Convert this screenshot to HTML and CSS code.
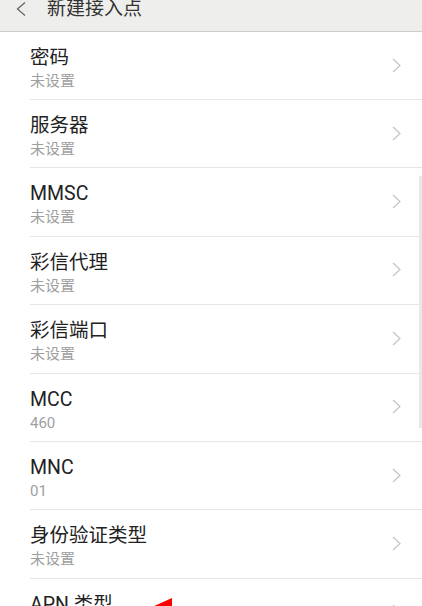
FILE: index.html
```html
<!DOCTYPE html>
<html lang="zh-CN">
<head>
    <meta charset="UTF-8">
    <meta name="viewport" content="width=device-width, initial-scale=1.0">
    <title>新建接入点</title>
    <link rel="stylesheet" href="styles.css">
</head>
<body>

    <!-- Title bar -->
    <div class="title-bar">
        <svg class="back-icon" viewBox="0 0 10 14" width="10" height="14">
            <polyline points="9,0.5 1.5,7 9,13.5" fill="none" stroke="#666" stroke-width="1.3"/>
        </svg>
        <span class="title">新建接入点</span>
    </div>

    <!-- Settings list -->
    <div class="settings-list">
        <div class="setting-row">
            <div class="setting-text">
                <div class="setting-name">密码</div>
                <div class="setting-value">未设置</div>
            </div>
            <svg class="chevron" viewBox="0 0 9 15" width="9" height="15"><polyline points="1,1 8,7.5 1,14" fill="none" stroke="#c4c4c4" stroke-width="1.2"/></svg>
        </div>
        <div class="setting-row">
            <div class="setting-text">
                <div class="setting-name">服务器</div>
                <div class="setting-value">未设置</div>
            </div>
            <svg class="chevron" viewBox="0 0 9 15" width="9" height="15"><polyline points="1,1 8,7.5 1,14" fill="none" stroke="#c4c4c4" stroke-width="1.2"/></svg>
        </div>
        <div class="setting-row">
            <div class="setting-text">
                <div class="setting-name">MMSC</div>
                <div class="setting-value">未设置</div>
            </div>
            <svg class="chevron" viewBox="0 0 9 15" width="9" height="15"><polyline points="1,1 8,7.5 1,14" fill="none" stroke="#c4c4c4" stroke-width="1.2"/></svg>
        </div>
        <div class="setting-row">
            <div class="setting-text">
                <div class="setting-name">彩信代理</div>
                <div class="setting-value">未设置</div>
            </div>
            <svg class="chevron" viewBox="0 0 9 15" width="9" height="15"><polyline points="1,1 8,7.5 1,14" fill="none" stroke="#c4c4c4" stroke-width="1.2"/></svg>
        </div>
        <div class="setting-row">
            <div class="setting-text">
                <div class="setting-name">彩信端口</div>
                <div class="setting-value">未设置</div>
            </div>
            <svg class="chevron" viewBox="0 0 9 15" width="9" height="15"><polyline points="1,1 8,7.5 1,14" fill="none" stroke="#c4c4c4" stroke-width="1.2"/></svg>
        </div>
        <div class="setting-row">
            <div class="setting-text">
                <div class="setting-name">MCC</div>
                <div class="setting-value">460</div>
            </div>
            <svg class="chevron" viewBox="0 0 9 15" width="9" height="15"><polyline points="1,1 8,7.5 1,14" fill="none" stroke="#c4c4c4" stroke-width="1.2"/></svg>
        </div>
        <div class="setting-row">
            <div class="setting-text">
                <div class="setting-name">MNC</div>
                <div class="setting-value">01</div>
            </div>
            <svg class="chevron" viewBox="0 0 9 15" width="9" height="15"><polyline points="1,1 8,7.5 1,14" fill="none" stroke="#c4c4c4" stroke-width="1.2"/></svg>
        </div>
        <div class="setting-row">
            <div class="setting-text">
                <div class="setting-name">身份验证类型</div>
                <div class="setting-value">未设置</div>
            </div>
            <svg class="chevron" viewBox="0 0 9 15" width="9" height="15"><polyline points="1,1 8,7.5 1,14" fill="none" stroke="#c4c4c4" stroke-width="1.2"/></svg>
        </div>
        <div class="setting-row">
            <div class="setting-text">
                <div class="setting-name">APN 类型</div>
                <div class="setting-value">default,mms,supl</div>
            </div>
            <svg class="chevron" viewBox="0 0 9 15" width="9" height="15"><polyline points="1,1 8,7.5 1,14" fill="none" stroke="#c4c4c4" stroke-width="1.2"/></svg>
        </div>
    </div>

    <!-- Scroll indicator -->
    <div class="scroll-thumb"></div>

    <!-- Red annotation arrow -->
    <svg class="arrow-mark" viewBox="0 0 30 14" width="30" height="14">
        <polygon points="2,14 22,5 22,14" fill="#ff0000"/>
    </svg>

</body>
</html>
```

FILE: styles.css
```css
/* General body styling */
body {
    font-family: Roboto, "Noto Sans CJK SC", sans-serif;
    margin: 0;
    padding: 0;
    background-color: #fff;
    height: 606px;
    overflow: hidden;
    position: relative;
}

/* Title bar, partly scrolled off the top */
.title-bar {
    height: 31px;
    background-color: #eeeeec;
    border-bottom: 1px solid #cdcdcb;
    display: flex;
    align-items: flex-start;
    padding-left: 16px;
}

.back-icon {
    margin-top: 2px;
}

.title {
    font-size: 19px;
    line-height: 19px;
    color: #333;
    margin-left: 21px;
    margin-top: -1px;
}

/* Settings rows */
.setting-row {
    box-sizing: border-box;
    height: 68.4px;
    margin-left: 30px;
    padding-top: 12px;
    padding-right: 21px;
    border-bottom: 1px solid #e6e6e6;
    display: flex;
    align-items: flex-start;
}

.setting-row:first-child {
    height: 68px;
}

.setting-text {
    flex: 1;
}

.setting-name {
    font-size: 19.5px;
    line-height: 27px;
    color: #222;
}

.setting-value {
    font-size: 15px;
    line-height: 20px;
    color: #a0a0a0;
}

.chevron {
    align-self: center;
    margin-top: -13px;
}

/* Scroll indicator on the right edge */
.scroll-thumb {
    position: absolute;
    right: 0;
    top: 176px;
    width: 3px;
    height: 252px;
    background-color: #e8e8e8;
}

/* Red annotation arrow */
.arrow-mark {
    position: absolute;
    left: 150px;
    top: 593px;
}
```
